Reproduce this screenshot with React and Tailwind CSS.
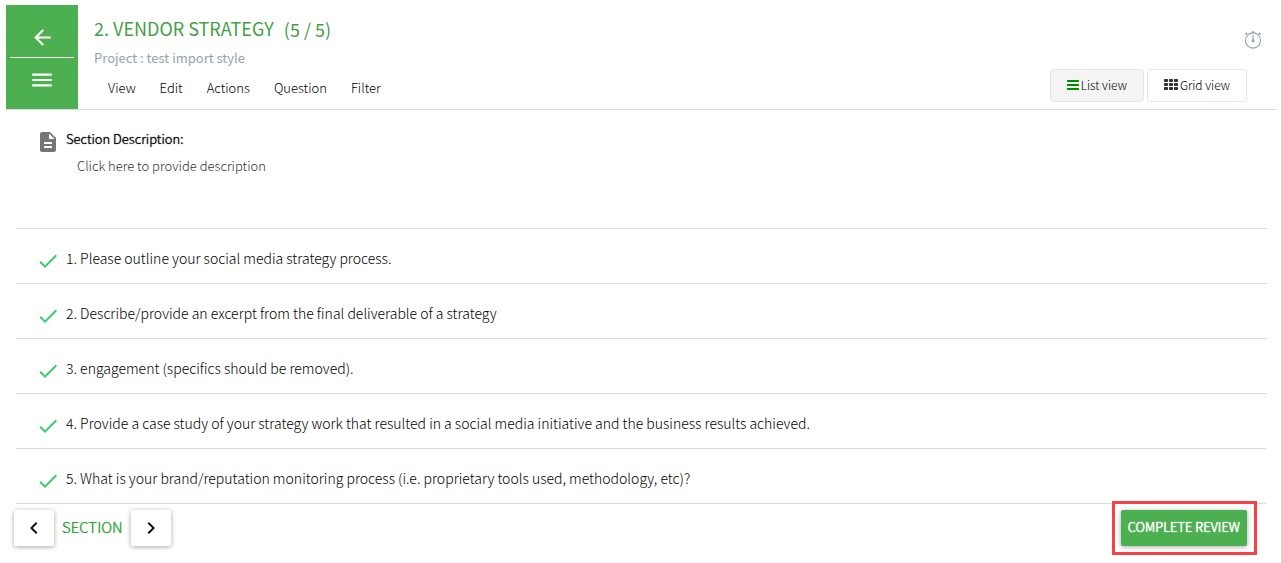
import { MdArrowBack, MdMenu, MdDescription, MdCheck, MdChevronLeft, MdChevronRight } from 'react-icons/md';

const menuItems = ['View', 'Edit', 'Actions', 'Question', 'Filter'];

const questions = [
  'Please outline your social media strategy process.',
  'Describe/provide an excerpt from the final deliverable of a strategy',
  'engagement (specifics should be removed).',
  'Provide a case study of your strategy work that resulted in a social media initiative and the business results achieved.',
  'What is your brand/reputation monitoring process (i.e. proprietary tools used, methodology, etc)?',
];

const TimerIcon = () => (
  <svg width="18" height="18" viewBox="0 0 18 18" fill="none" stroke="#90a4ae" strokeWidth="1.1">
    <circle cx="9" cy="9.5" r="7.6" />
    <path d="M9 4v5" />
    <circle cx="9" cy="9.8" r="1" fill="#90a4ae" />
    <path d="M8 1.2h2M1.4 3.4l1.8-1.4M16.6 3.4l-1.8-1.4" strokeWidth="1.8" />
  </svg>
);

const ListIcon = () => (
  <svg width="12" height="10" viewBox="0 0 12 10" fill="#008a00">
    <rect y="0" width="12" height="2" rx="0.5" />
    <rect y="4" width="12" height="2" rx="0.5" />
    <rect y="8" width="12" height="2" rx="0.5" />
  </svg>
);

const GridIcon = () => (
  <svg width="14" height="11" viewBox="0 0 14 11" fill="#333333">
    {[0, 4, 8].map(y =>
      [0, 5, 10].map(x => <rect key={`${x}-${y}`} x={x} y={y} width="4" height="3" rx="0.7" />)
    )}
  </svg>
);

const Header = () => (
  <header className="flex ml-1.5 mr-1 border-b border-[#dddddd]">
    <nav className="w-18 h-26 shrink-0 px-1 bg-[#4caf50] text-white flex flex-col">
      <button aria-label="Back" className="h-[53px] pt-3 flex items-center justify-center border-b border-white">
        <MdArrowBack size={25} />
      </button>
      <button aria-label="Menu" className="h-11 flex items-center justify-center">
        <MdMenu size={26} />
      </button>
    </nav>

    <div className="flex-1 pl-4 pt-2.5">
      <h1 className="flex items-end gap-2.5 text-lg leading-[26px] text-[#43a047]">
        <span className="pb-px">2. VENDOR STRATEGY</span>
        <span>(5 / 5)</span>
      </h1>
      <p className="pt-1 text-[13px] leading-6 text-[#90a4ae]">Project : test import style</p>
      <div className="flex gap-6 pl-3.5 pt-1.5 text-[13px] leading-6 font-light text-black">
        {menuItems.map(item => (
          <button key={item}>{item}</button>
        ))}
      </div>
    </div>

    <div className="flex flex-col items-end justify-between pt-6.5 pb-[7px]">
      <button aria-label="Timer" className="mr-[15px]">
        <TimerIcon />
      </button>
      <div className="flex gap-[3px] mr-7.5 text-xs font-light text-black">
        <button className="h-[33px] px-4 pb-0.5 flex items-center gap-0.5 rounded-sm border border-[#e5e5e5] bg-[#f4f4f4]">
          <ListIcon />
          List view
        </button>
        <button className="h-[33px] px-4 pb-0.5 flex items-center gap-0.5 rounded-sm border border-[#e5e5e5] bg-white">
          <GridIcon />
          Grid view
        </button>
      </div>
    </div>
  </header>
);

const Footer = () => (
  <footer className="-mt-[3px] flex items-center justify-between pl-3.5 pr-6">
    <div className="flex items-center gap-2">
      <button aria-label="Previous section" className="w-10 h-9 flex items-center justify-center rounded-xs bg-white text-[#111111] shadow-[0_1px_5px_rgba(0,0,0,0.35)]">
        <MdChevronLeft size={24} />
      </button>
      <span className="pb-0.5 text-[15px] font-light text-[#2e9a33] [text-shadow:0_0_1px_#4caf50]">SECTION</span>
      <button aria-label="Next section" className="w-10 h-9 flex items-center justify-center rounded-xs bg-white text-[#111111] shadow-[0_1px_5px_rgba(0,0,0,0.35)]">
        <MdChevronRight size={24} />
      </button>
    </div>
    <div className="border-3 border-[#f94144] p-1.5 pr-[7px]">
      <button className="h-9 px-[7px] pb-0.5 rounded-xs bg-[#4caf50] text-[13px] font-light text-white [text-shadow:0_0_1px_#fff,0_0_1px_#fff] shadow-[0_1px_5px_rgba(0,0,0,0.35)]">
        COMPLETE REVIEW
      </button>
    </div>
  </footer>
);

export default function App() {
  return (
    <div className="pt-[5px] bg-white font-['Noto_Sans_CJK_SC','Noto_Sans',sans-serif]">
      <Header />

      <main className="ml-4 mr-3.5">
        <section className="flex gap-1.5 h-[119px] pl-5 pt-5 border-b border-[#dddddd]">
          <MdDescription size={24} className="shrink-0 text-[#757575]" />
          <div>
            <h2 className="text-[13px] leading-[18px] font-light text-black [text-shadow:0_0_1px_#000]">Section Description:</h2>
            <p className="pl-[11px] pt-1.5 text-[13px] leading-6 font-light text-[#333333]">Click here to provide description</p>
          </div>
        </section>

        <ol>
          {questions.map((question, i) => (
            <li key={question} className="flex gap-1.5 h-[55px] pl-5 pt-5 border-b border-[#dddddd]">
              <MdCheck size={24} className="shrink-0 text-[#3dca6e]" />
              <span className="text-sm leading-[18px] font-light text-black">{i + 1}. {question}</span>
            </li>
          ))}
        </ol>
      </main>

      <Footer />
    </div>
  );
}
